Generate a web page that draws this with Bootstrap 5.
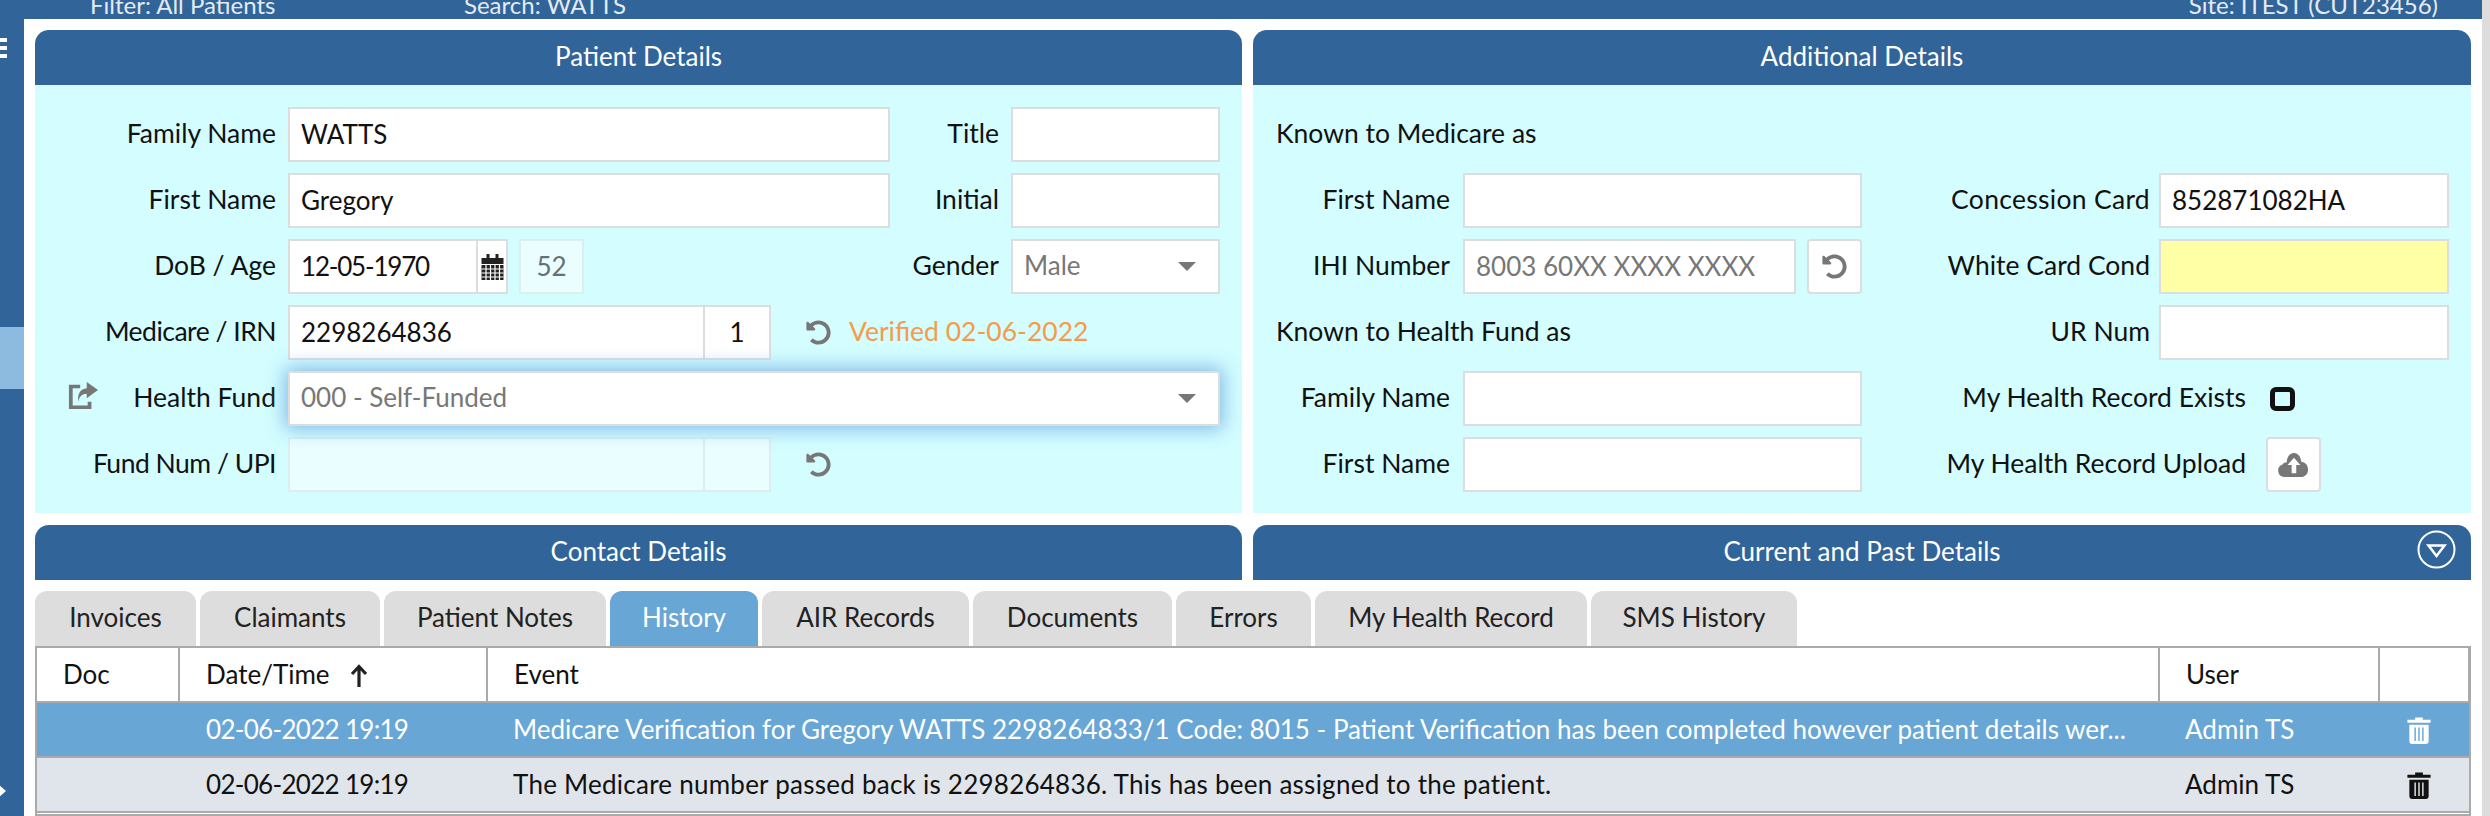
<!DOCTYPE html>
<html lang="en"><head><meta charset="utf-8"><title>Patient</title>
<link href="https://cdn.jsdelivr.net/npm/bootstrap@5.3.0/dist/css/bootstrap.min.css" rel="stylesheet">
<style>
html,body{height:816px;overflow:hidden;background:#ddd}
body{font-family:"Lato","Liberation Sans",sans-serif;font-size:26.5px;color:#111;line-height:1.2}
.shell{width:2482px;height:816px}
.topstrip{height:19px;background:#316499;color:#e4ebf2;font-size:24px;overflow:hidden;padding:0 44px 0 90px}
.topstrip span{margin-top:-10px;line-height:29px;display:block}
.t1{width:374px}.t3{margin-left:auto}
.lower{height:797px;background:#fff}
.side{width:24px;background:#316499;overflow:hidden}
.side svg{display:block;flex:none}
.side-on{height:62px;margin-top:269px;background:#8dbbe0;flex:none}
.burger{margin:19px 0 0 -13px}
.chev{margin:393px 0 0 -8px}
.mainarea{padding:11px 11px 0 11px;min-width:0}
.cols{gap:11px}
.cols2{margin-top:12px}
.pane{width:1207px;border:0;border-radius:0;background:transparent;flex:none}
.pane.second{width:1218px}
.pane .panehead{height:55px;padding:0 0 2px;background:#316499;color:#fff;border:0;border-radius:14px 14px 0 0;font-size:26px}
.pane .panebody{background:#d3fdff;height:428px;padding:22px 0 0 0;gap:11px;flex:none}
.frow{height:55px}
.lab{text-align:right;flex:none;white-space:nowrap;padding-bottom:2px}
.form-control.fin,.fin{border:2.5px solid #ddd;border-radius:0;height:55px;font-size:26px;padding:0 11px 2px;color:#111;box-shadow:none;background-color:#fff;font-family:inherit;flex:none;line-height:1.2}
.fin::placeholder{color:#777;opacity:1}
.tight{letter-spacing:-1.2px}
.nar{letter-spacing:-.5px}
.wid{letter-spacing:.3px}
.lab-main{width:241px;margin-right:12px}
.w602{width:602px}
.lab-t{width:109px;margin-right:12px}
.w209{width:209px}
.w190{width:190px}.w65{width:65px;margin-left:11px}.w417{width:417px}.w66{width:66px}
.noleft.noleft{border-left-width:0}
.w399{width:399px}.w333{width:333px}.w290{width:290px}.w932{width:932px}
.lab.gender-lab{width:auto;margin-left:auto;margin-right:12px}
.endgap{margin-right:22px}
.fin.sel{color:#777}
.selbox{position:relative;flex:none}
.caret{position:absolute;right:24px;top:23px;width:0;height:0;border-left:9px solid transparent;border-right:9px solid transparent;border-top:9px solid #777}
.form-control.fin.dis:disabled{background:#ebfeff;border-color:#ddeeef;color:#5d7377;opacity:1}
.addon{width:30px;height:55px;border:2.5px solid #ddd;border-left-width:0;background:#fff;flex:none}
.glowwrap{z-index:1}
.glow{box-shadow:0 0 18px 3px #84bbe8}
.verified{color:#f59b4a;margin-left:18px;font-size:26.5px;padding-bottom:2px}
.undo{display:block;margin-left:35px;flex:none}
.share{position:absolute;left:33px;top:11px}
.lab2{width:197px;margin-right:13px}
.sqbtn.sqbtn{width:55px;height:55px;background:#fff;border:2.5px solid #ddd;border-radius:4px;padding:0;flex:none}
.gap11{margin-left:11px}
.lab-right{width:288px;margin-right:9px}
.head2{padding-left:23px;padding-bottom:2px}
.lab-known{width:610px;text-align:left}
.lab-ur{width:287px;margin-right:9px}
.lab-exists{width:384px;margin-right:24px}
.lab-upload{width:384px;margin-right:20px}
.chk{display:block;flex:none;width:25px;height:24px;border:5px solid #111;border-radius:6px}
.yel.yel{background:#ffffa5}
.tabline{gap:4px;margin-top:11px;height:55px;flex-wrap:nowrap}
.tabline li{background:#ddd;border-radius:12px 12px 0 0;font-size:26px;color:#222;white-space:nowrap;padding-bottom:2px}
.tabline li.on{background:#68a6d6;color:#fff}
.tw1{width:161px}.tw2{width:180px}.tw3{width:222px}.tw4{width:148px}.tw5{width:207px}.tw6{width:199px}.tw7{width:135px}.tw8{width:272px}.tw9{width:206px}
.gridwrap{border:2.5px solid #aaa;width:2436px;height:170px;overflow:hidden}
.hist.hist{table-layout:fixed;border-collapse:collapse;width:2432px;margin:0;font-size:26px;line-height:1.2}
.c1{width:142px}.c2{width:308px}.c3{width:1672px}.c4{width:220px}.c5{width:90px}
.hist.hist th,.hist.hist td{height:55px;padding:0 0 0 26px;vertical-align:middle;white-space:nowrap;overflow:hidden;border:0;border-bottom:2.5px solid #aaa;font-weight:400;box-sizing:border-box;box-shadow:none}
.hist.hist th{height:54px;background:#fff;border-right:2.5px solid #aaa;color:#111}
.hist.hist tr.sel td{background:#68a6d6;color:#fff}
.hist.hist tr.alt td{background:#dfe5ea;color:#111}
.hist.hist td.datecell{letter-spacing:-.7px;padding-left:27px}
.hist.hist td.evt2{letter-spacing:.25px}
.hist.hist td.bin{padding:0 10px 0 0;text-align:center}
.bin svg{display:block;margin:0 auto}
.sortup{margin-left:20px;vertical-align:-3px}
.cir{position:absolute;right:15px;top:5px}
</style></head><body>
<div class="shell">
<div class="topstrip d-flex"><span class="t1">Filter: All Patients</span><span>Search: WATTS</span><span class="t3">Site: ITEST (CUT23456)</span></div>
<div class="lower d-flex">
 <div class="side d-flex flex-column flex-none">
  <svg class="burger" width="20" height="20" viewBox="0 0 20 20" fill="#fff"><rect y="0" width="20" height="4"/><rect y="8" width="20" height="4"/><rect y="16" width="20" height="4"/></svg>
  <div class="side-on"></div>
  <svg class="chev" width="14" height="18" viewBox="0 0 14 18"><path d="M3 2l8 7-8 7" fill="none" stroke="#fff" stroke-width="4"/></svg>
 </div>
 <div class="mainarea flex-grow-1">
  <div class="cols d-flex">
   <div class="card pane">
    <div class="card-header panehead d-flex align-items-center justify-content-center">Patient Details</div>
    <div class="card-body panebody d-flex flex-column">
     <div class="frow d-flex align-items-center"><div class="lab lab-main">Family Name</div><input class="form-control fin w602" value="WATTS"><div class="lab lab-t">Title</div><input class="form-control fin w209"></div>
     <div class="frow d-flex align-items-center"><div class="lab lab-main">First Name</div><input class="form-control fin w602" value="Gregory"><div class="lab lab-t">Initial</div><input class="form-control fin w209"></div>
     <div class="frow d-flex align-items-center"><div class="lab lab-main">DoB / Age</div><input class="form-control fin w190 tight" value="12-05-1970"><div class="addon d-flex align-items-center justify-content-center"><svg width="25" height="27" viewBox="0 0 24 27"><path fill="#222" d="M1 5h5V1h3v4h6V1h3v4h5v6H1zM1 12h22v15H1z"/><path stroke="#fff" stroke-width="1.2" d="M1 16h22M1 20h22M1 24h22M5.500 12v15M10 12v15M14.500 12v15M19 12v15"/></svg></div><input class="form-control fin dis w65 text-center" value="52" disabled><div class="lab gender-lab">Gender</div><div class="selbox endgap"><div class="fin sel w209 d-flex align-items-center">Male</div><span class="caret"></span></div></div>
     <div class="frow d-flex align-items-center"><div class="lab lab-main nar">Medicare / IRN</div><input class="form-control fin w417" value="2298264836"><input class="form-control fin w66 noleft text-center" value="1"><svg class="undo" width="25" height="25" viewBox="0 0 512 512"><path fill="#777" d="M255.500 8c-66.300.1-126.400 26.200-170.900 68.700L49 41C33.900 25.900 8 36.600 8 57.900V192c0 13.300 10.700 24 24 24h134.100c21.400 0 32.100-25.900 17-41l-41.800-41.700c30.900-28.900 70.800-44.900 113.200-45.300 92.400-.8 170.300 74 169.500 169.400C423.200 348 349.800 424 256 424c-41.100 0-80-14.700-110.600-41.600-4.700-4.100-11.900-3.900-16.400.6L89.300 422.700c-4.800 4.800-4.600 12.800.5 17.400C133.800 479.800 192.100 504 256 504c137 0 248-111 248-248C504 119.200 392.400 7.800 255.500 8z"/></svg><div class="verified">Verified 02-06-2022</div></div>
     <div class="frow d-flex align-items-center position-relative glowwrap">
      <svg class="share" width="30" height="27" viewBox="0 0 32 30" preserveAspectRatio="none"><path fill="none" stroke="#777" stroke-width="4" d="M13 5H3v23h20v-6"/><path fill="#777" d="M20 0l12 9-12 9v-5c-5 0-8 3-9 9-1-9 2-14 9-15z"/></svg>
      <div class="lab lab-main">Health Fund</div><div class="selbox"><div class="fin sel glow w932 d-flex align-items-center">000 - Self-Funded</div><span class="caret"></span></div></div>
     <div class="frow d-flex align-items-center"><div class="lab lab-main nar">Fund Num / UPI</div><input class="form-control fin dis w417" disabled><input class="form-control fin dis w66 noleft" disabled><svg class="undo" width="25" height="25" viewBox="0 0 512 512"><path fill="#777" d="M255.500 8c-66.300.1-126.400 26.200-170.900 68.700L49 41C33.900 25.900 8 36.600 8 57.900V192c0 13.300 10.700 24 24 24h134.100c21.400 0 32.100-25.900 17-41l-41.800-41.700c30.900-28.900 70.800-44.900 113.200-45.300 92.400-.8 170.300 74 169.500 169.400C423.200 348 349.800 424 256 424c-41.100 0-80-14.700-110.600-41.600-4.700-4.100-11.900-3.900-16.400.6L89.300 422.700c-4.800 4.800-4.600 12.800.5 17.400C133.800 479.800 192.100 504 256 504c137 0 248-111 248-248C504 119.200 392.400 7.800 255.500 8z"/></svg></div>
    </div>
   </div>
   <div class="card pane second">
    <div class="card-header panehead d-flex align-items-center justify-content-center">Additional Details</div>
    <div class="card-body panebody d-flex flex-column">
     <div class="frow d-flex align-items-center head2">Known to Medicare as</div>
     <div class="frow d-flex align-items-center"><div class="lab lab2">First Name</div><input class="form-control fin w399"><div class="lab lab-right wid">Concession Card</div><input class="form-control fin w290" value="852871082HA"></div>
     <div class="frow d-flex align-items-center"><div class="lab lab2">IHI Number</div><input class="form-control fin w333" placeholder="8003 60XX XXXX XXXX"><button class="btn sqbtn gap11 d-flex align-items-center justify-content-center" type="button"><svg width="25" height="25" viewBox="0 0 512 512"><path fill="#777" d="M255.500 8c-66.300.1-126.400 26.200-170.900 68.700L49 41C33.900 25.900 8 36.600 8 57.900V192c0 13.300 10.700 24 24 24h134.100c21.400 0 32.100-25.900 17-41l-41.800-41.700c30.900-28.900 70.800-44.900 113.200-45.300 92.400-.8 170.300 74 169.500 169.400C423.200 348 349.800 424 256 424c-41.100 0-80-14.700-110.600-41.600-4.700-4.100-11.900-3.900-16.400.6L89.300 422.700c-4.800 4.800-4.600 12.800.5 17.400C133.800 479.800 192.100 504 256 504c137 0 248-111 248-248C504 119.200 392.400 7.800 255.500 8z"/></svg></button><div class="lab lab-right">White Card Cond</div><input class="form-control fin w290 yel"></div>
     <div class="frow d-flex align-items-center"><div class="lab lab-known head2">Known to Health Fund as</div><div class="lab lab-ur ms-auto">UR Num</div><input class="form-control fin w290 endgap"></div>
     <div class="frow d-flex align-items-center"><div class="lab lab2">Family Name</div><input class="form-control fin w399"><div class="lab lab-exists">My Health Record Exists</div><span class="chk"></span></div>
     <div class="frow d-flex align-items-center"><div class="lab lab2">First Name</div><input class="form-control fin w399"><div class="lab lab-upload">My Health Record Upload</div><button class="btn sqbtn d-flex align-items-center justify-content-center" type="button"><svg width="33" height="24" viewBox="0 0 36 26"><path fill="#777" d="M8 26a7 7 0 0 1-2-13.600C7 11 9 10 10.500 10 11 4 14 0 18.500 0S26 4 26.500 9.500A8.500 8.500 0 0 1 28 26z"/><path fill="#fff" d="M18.500 5l7 8H21v9h-5v-9h-4.500z"/></svg></button></div>
    </div>
   </div>
  </div>
  <div class="cols cols2 d-flex">
   <div class="card pane"><div class="card-header panehead d-flex align-items-center justify-content-center">Contact Details</div></div>
   <div class="card pane second"><div class="card-header panehead d-flex align-items-center justify-content-center position-relative">Current and Past Details
    <svg class="cir" width="39" height="39" viewBox="0 0 39 39"><circle cx="19.500" cy="19.500" r="18" fill="none" stroke="#fff" stroke-width="2"/><path d="M11.500 15.500h16l-8 10.500z" fill="none" stroke="#fff" stroke-width="2.500"/></svg></div></div>
  </div>
  <ul class="nav tabline">
   <li class="tw1 d-flex align-items-center justify-content-center">Invoices</li><li class="tw2 d-flex align-items-center justify-content-center">Claimants</li><li class="tw3 d-flex align-items-center justify-content-center">Patient Notes</li><li class="on tw4 d-flex align-items-center justify-content-center">History</li><li class="tw5 d-flex align-items-center justify-content-center">AIR Records</li><li class="tw6 d-flex align-items-center justify-content-center">Documents</li><li class="tw7 d-flex align-items-center justify-content-center">Errors</li><li class="tw8 d-flex align-items-center justify-content-center">My Health Record</li><li class="tw9 d-flex align-items-center justify-content-center">SMS History</li>
  </ul>
  <div class="gridwrap"><table class="table hist"><colgroup><col class="c1"><col class="c2"><col class="c3"><col class="c4"><col class="c5"></colgroup>
   <thead><tr><th>Doc</th><th>Date/Time<svg class="sortup" width="18" height="23" viewBox="0 0 18 23"><path fill="none" stroke="#222" stroke-width="3.200" d="M9 23V3M2 10l7-7.500L16 10"/></svg></th><th>Event</th><th>User</th><th></th></tr></thead>
   <tbody>
   <tr class="sel"><td></td><td class="datecell">02-06-2022 19:19</td><td>Medicare Verification for Gregory WATTS 2298264833/1 Code: 8015 - Patient Verification has been completed however patient details wer...</td><td>Admin TS</td><td class="bin"><svg width="24" height="28" viewBox="0 0 24 29"><path fill="#fff" d="M0 4h8V1.500h8V4h8v3H0zM2 9h20v17a3 3 0 0 1-3 3H5a3 3 0 0 1-3-3z"/><path stroke="#68a6d6" stroke-width="1.500" d="M8 12v14M12 12v14M16 12v14"/></svg></td></tr>
   <tr class="alt"><td></td><td class="datecell">02-06-2022 19:19</td><td class="evt2">The Medicare number passed back is 2298264836. This has been assigned to the patient.</td><td>Admin TS</td><td class="bin"><svg width="24" height="28" viewBox="0 0 24 29"><path fill="#111" d="M0 4h8V1.500h8V4h8v3H0zM2 9h20v17a3 3 0 0 1-3 3H5a3 3 0 0 1-3-3z"/><path stroke="#dfe5ea" stroke-width="1.500" d="M8 12v14M12 12v14M16 12v14"/></svg></td></tr>
   </tbody></table></div>
 </div>
</div>
</div>
<script src="https://cdn.jsdelivr.net/npm/bootstrap@5.3.0/dist/js/bootstrap.bundle.min.js"></script>
</body></html>
